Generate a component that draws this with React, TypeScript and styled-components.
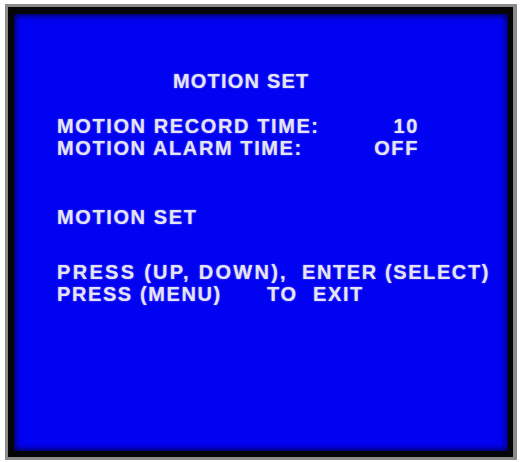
import React from 'react'
import styled, { createGlobalStyle } from 'styled-components'

const GlobalStyle = createGlobalStyle`
    html, body {
        margin: 0;
        padding: 0;
        background: #fff;
    }
    body {
        width: 520px;
        height: 462px;
        overflow: hidden;
    }
`

const StyleFrame = styled.div`
    box-sizing: border-box;
    margin: 4px 0 0 5px;
    width: 512px;
    height: 456px;
    border: 3px solid #8c8c8c;
    border-right-width: 4px;
    background: #050505;
    padding: 7px 5px 6px 6px;
`

const StyleScreen = styled.div`
    box-sizing: border-box;
    height: 100%;
    background: #0202f2;
    box-shadow: inset 0 0 6px 1px rgba(0, 0, 20, 0.9);
    padding: 56px 0 0 43px;
    color: #e4e4f6;
    font-family: "Liberation Sans", Arial, sans-serif;
    font-weight: bold;
    font-size: 20px;
    line-height: 22px;
    letter-spacing: 1.6px;
    text-shadow: 0 0 1.5px rgba(220, 220, 255, 0.7);
`

const StyleTitle = styled.div`
    margin-left: 116px;
    letter-spacing: 1.2px;
`

const StyleTable = styled.div`
    display: grid;
    grid-template-columns: 300px 62px;
    margin-top: 23px;
`

const StyleValue = styled.div`
    justify-self: end;
`

const StyleLine = styled.div<{ $gap?: number }>`
    display: flex;
    white-space: pre;
    margin-top: ${p => p.$gap ?? 0}px;
`

const StyleCell = styled.span<{ $w?: number; $ls?: number }>`
    flex: none;
    width: ${p => (p.$w ? `${p.$w}px` : 'auto')};
    ${p => (p.$ls ? `letter-spacing: ${p.$ls}px;` : '')}
`

export default function App() {
    return (
        <>
            <GlobalStyle />
            <StyleFrame>
                <StyleScreen>
                    <StyleTitle>MOTION SET</StyleTitle>
                    <StyleTable>
                        <div>MOTION RECORD TIME:</div>
                        <StyleValue>10</StyleValue>
                        <div>MOTION ALARM TIME:</div>
                        <StyleValue>OFF</StyleValue>
                    </StyleTable>
                    <StyleLine $gap={47}>MOTION SET</StyleLine>
                    <StyleLine $gap={33}>
                        <StyleCell $w={245} $ls={2.3}>PRESS (UP, DOWN),</StyleCell>
                        <StyleCell>ENTER (SELECT)</StyleCell>
                    </StyleLine>
                    <StyleLine>
                        <StyleCell $w={210}>PRESS (MENU)</StyleCell>
                        <StyleCell $w={46}>TO</StyleCell>
                        <StyleCell>EXIT</StyleCell>
                    </StyleLine>
                </StyleScreen>
            </StyleFrame>
        </>
    )
}
